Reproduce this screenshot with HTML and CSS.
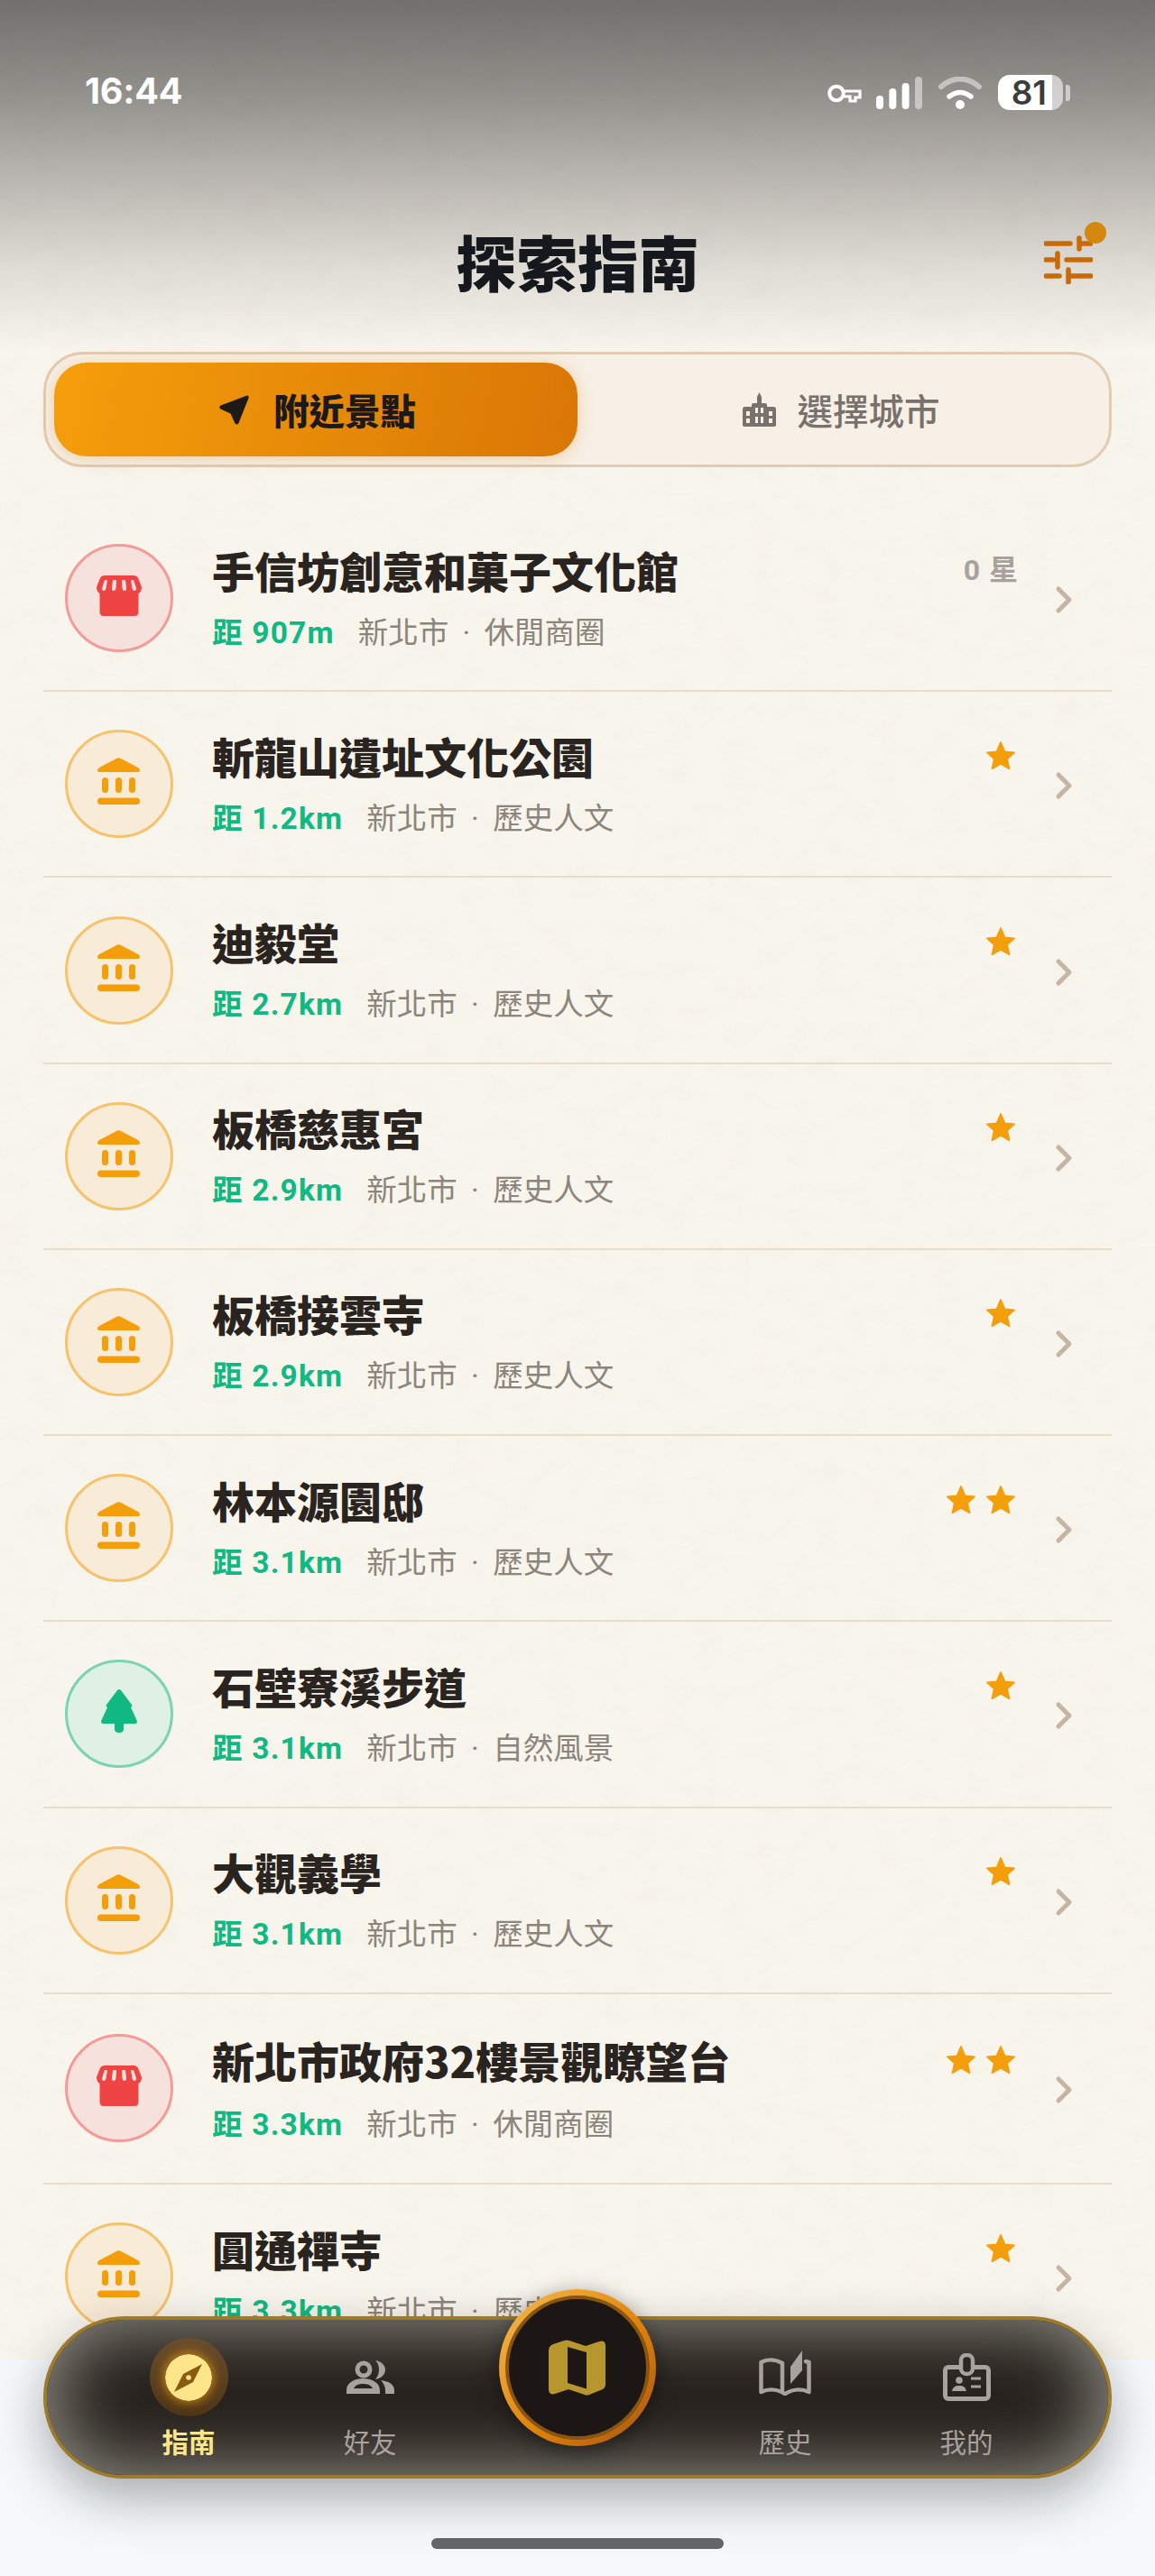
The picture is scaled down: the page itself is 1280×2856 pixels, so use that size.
FILE: index.html
```html
<!DOCTYPE html>
<html lang="zh-Hant">
<head>
<meta charset="utf-8">
<title>探索指南</title>
<link rel="stylesheet" href="styles.css">
</head>
<body>
<svg class="sprite" aria-hidden="true">
  <defs>
    <filter id="fibre" x="0" y="0" width="100%" height="100%">
      <feTurbulence type="fractalNoise" baseFrequency="0.03 0.045" numOctaves="5" seed="7"/>
      <feColorMatrix type="matrix" values="0 0 0 0 0.55  0 0 0 0 0.48  0 0 0 0 0.36  0 0 0 1.6 -0.72"/>
    </filter>
  </defs>
  <symbol id="star" viewBox="0 0 24 24"><polygon points="12,2 15,9 22,9.6 16.8,14.3 18.3,21.5 12,17.8 5.7,21.5 7.2,14.3 2,9.6 9,9" fill="#f59e0b" stroke="#f59e0b" stroke-width="1.2" stroke-linejoin="round"/></symbol>
  <symbol id="chev" viewBox="0 0 40 40"><path d="M14 8 L26 20 L14 32" fill="none" stroke="#c4b5a5" stroke-width="5" stroke-linecap="round" stroke-linejoin="round"/></symbol>
  <symbol id="store" viewBox="0 0 50 45">
    <path d="M9 0 H41 Q45 0 46.5 4 L50 13 Q50 18 46.5 20 V40 Q46.5 45 42 45 H8 Q3.500 45 3.500 40 V20 Q0 18 0 13 L3.500 4 Q5 0 9 0Z" fill="#ef4444"/>
    <path d="M9 5 H12 L10.500 14 Q10 17 8 17 Q6 17 6 14 Z M18 5 H22 L21.500 14 Q21 17 19 17 Q17 17 17 14 Z M28 5 H32 L33 14 Q33 17 31 17 Q29 17 28.500 14 Z M38 5 H41 L44 14 Q44 17 42 17 Q40 17 39.500 14 Z" fill="#f6e2dc"/>
  </symbol>
  <symbol id="temple" viewBox="0 0 47 52">
    <path d="M22 .6 Q23.500 -.2 25 .6 L45 11 Q47 12.500 47 14 Q47 16 44 16 H3 Q0 16 0 14 Q0 12.500 2 11Z" fill="#f59e0b"/>
    <rect x="5" y="22" width="7" height="17" rx="3.500" fill="#f59e0b"/>
    <rect x="20" y="22" width="7" height="17" rx="3.500" fill="#f59e0b"/>
    <rect x="35" y="22" width="7" height="17" rx="3.500" fill="#f59e0b"/>
    <rect x="0" y="44.500" width="47" height="7.500" rx="3.700" fill="#f59e0b"/>
  </symbol>
  <symbol id="tree" viewBox="0 0 40 48">
    <path d="M18 1 Q20 -1 22 1 L34 17 Q35 19 33 20 L39.500 34 Q41 38 37 38 H25 V44 Q25 48 20 48 Q15 48 15 44 V38 H3 Q-1 38 .5 34 L7 20 Q5 19 6 17Z" fill="#10b981"/>
  </symbol>
</svg>

<div class="phone">
  <main class="paper">
    <svg class="paper-grain" aria-hidden="true"><rect width="100%" height="100%" filter="url(#fibre)"/></svg>
    <div class="paper-shade"></div>

    <div class="statusbar">
      <span class="clock">16:44</span>
      <div class="status-icons">
        <svg class="ic-key" viewBox="0 0 38 21"><circle cx="10" cy="10.500" r="7.800" fill="none" stroke="#fff" stroke-width="4"/><path d="M18 8 H36 V15 H31 V19 H25 V14 H18" fill="none" stroke="#fff" stroke-width="3.200"/></svg>
        <svg class="ic-signal" viewBox="0 0 51 36"><rect x="0" y="21" width="8" height="15" rx="4" fill="#fff"/><rect x="14.300" y="13" width="8" height="23" rx="4" fill="#fff"/><rect x="28.600" y="7" width="8" height="29" rx="4" fill="#fff"/><rect x="43" y="0" width="8" height="36" rx="4" fill="#fff" fill-opacity=".48"/></svg>
        <svg class="ic-wifi" viewBox="0 0 48 36"><path d="M3 11 Q24 -6 45 11" fill="none" stroke="#fff" stroke-opacity=".48" stroke-width="6" stroke-linecap="round"/><path d="M12 22 Q24 13 36 22" fill="none" stroke="#fff" stroke-width="5.500" stroke-linecap="round"/><circle cx="24" cy="31" r="5" fill="#fff"/></svg>
        <div class="battery"><span class="battery-cell">81</span><span class="battery-nub"></span></div>
      </div>
    </div>

    <header class="topbar">
      <h1 class="page-title">探索指南</h1>
      <button class="filter-btn" aria-label="篩選">
        <svg class="ic-filter" viewBox="0 0 54 54"><path d="M2 9 H29 M40 9 H52 M39 3 V15 M2 27 H10 M25 27 H52 M15 20 V35 M2 45 H17 M30 45 H52 M27 38 V52" fill="none" stroke="#c96a08" stroke-width="5.500" stroke-linecap="round"/></svg>
        <span class="filter-dot"></span>
      </button>
    </header>

    <div class="segment">
      <button class="seg seg-on">
        <svg class="ic-arrow" viewBox="0 0 33 33"><path d="M30 .7 Q33 -.3 32.600 3 L21.500 31 Q19.500 34 17.300 31 L12.500 20.500 L1.500 15.500 Q-1 13.500 1.500 11.500Z" fill="#1c1917"/></svg>
        <span>附近景點</span>
      </button>
      <button class="seg seg-off">
        <svg class="ic-city" viewBox="0 0 37 38"><path fill-rule="evenodd" d="M18.500 0 L21 5 V12 H25 Q27 12 27 14 V16 H34 Q37 16 37 19 V36 Q37 38 35 38 H2 Q0 38 0 36 V19 Q0 16 3 16 H10 V14 Q10 12 12 12 H16 V5Z M4 21 V26 H8 V21Z M4 29 V34 H8 V29Z M14 17 V23 H17 V17Z M20 17 V23 H23 V17Z M14 27 V34 H17 V27Z M20 27 V34 H23 V27Z M29 21 V26 H33 V21Z M29 29 V34 H33 V29Z" fill="#78716c"/></svg>
        <span>選擇城市</span>
      </button>
    </div>

    <ul class="spots">
      <li class="spot">
        <div class="badge badge-shop"><svg class="ic-store"><use href="#store"/></svg></div>
        <div class="info">
          <div class="head"><h2 class="name">手信坊創意和菓子文化館</h2><span class="no-stars">0 星</span></div>
          <p class="meta"><b class="dist">距 907m</b><span class="place">新北市 · 休閒商圈</span></p>
        </div>
        <svg class="chev"><use href="#chev"/></svg>
      </li>
      <li class="spot">
        <div class="badge badge-hist"><svg class="ic-temple"><use href="#temple"/></svg></div>
        <div class="info">
          <div class="head"><h2 class="name">斬龍山遺址文化公園</h2><span class="stars"><svg class="star"><use href="#star"/></svg></span></div>
          <p class="meta"><b class="dist">距 1.2km</b><span class="place">新北市 · 歷史人文</span></p>
        </div>
        <svg class="chev"><use href="#chev"/></svg>
      </li>
      <li class="spot">
        <div class="badge badge-hist"><svg class="ic-temple"><use href="#temple"/></svg></div>
        <div class="info">
          <div class="head"><h2 class="name">迪毅堂</h2><span class="stars"><svg class="star"><use href="#star"/></svg></span></div>
          <p class="meta"><b class="dist">距 2.7km</b><span class="place">新北市 · 歷史人文</span></p>
        </div>
        <svg class="chev"><use href="#chev"/></svg>
      </li>
      <li class="spot">
        <div class="badge badge-hist"><svg class="ic-temple"><use href="#temple"/></svg></div>
        <div class="info">
          <div class="head"><h2 class="name">板橋慈惠宮</h2><span class="stars"><svg class="star"><use href="#star"/></svg></span></div>
          <p class="meta"><b class="dist">距 2.9km</b><span class="place">新北市 · 歷史人文</span></p>
        </div>
        <svg class="chev"><use href="#chev"/></svg>
      </li>
      <li class="spot">
        <div class="badge badge-hist"><svg class="ic-temple"><use href="#temple"/></svg></div>
        <div class="info">
          <div class="head"><h2 class="name">板橋接雲寺</h2><span class="stars"><svg class="star"><use href="#star"/></svg></span></div>
          <p class="meta"><b class="dist">距 2.9km</b><span class="place">新北市 · 歷史人文</span></p>
        </div>
        <svg class="chev"><use href="#chev"/></svg>
      </li>
      <li class="spot">
        <div class="badge badge-hist"><svg class="ic-temple"><use href="#temple"/></svg></div>
        <div class="info">
          <div class="head"><h2 class="name">林本源園邸</h2><span class="stars"><svg class="star"><use href="#star"/></svg><svg class="star"><use href="#star"/></svg></span></div>
          <p class="meta"><b class="dist">距 3.1km</b><span class="place">新北市 · 歷史人文</span></p>
        </div>
        <svg class="chev"><use href="#chev"/></svg>
      </li>
      <li class="spot">
        <div class="badge badge-nature"><svg class="ic-tree"><use href="#tree"/></svg></div>
        <div class="info">
          <div class="head"><h2 class="name">石壁寮溪步道</h2><span class="stars"><svg class="star"><use href="#star"/></svg></span></div>
          <p class="meta"><b class="dist">距 3.1km</b><span class="place">新北市 · 自然風景</span></p>
        </div>
        <svg class="chev"><use href="#chev"/></svg>
      </li>
      <li class="spot">
        <div class="badge badge-hist"><svg class="ic-temple"><use href="#temple"/></svg></div>
        <div class="info">
          <div class="head"><h2 class="name">大觀義學</h2><span class="stars"><svg class="star"><use href="#star"/></svg></span></div>
          <p class="meta"><b class="dist">距 3.1km</b><span class="place">新北市 · 歷史人文</span></p>
        </div>
        <svg class="chev"><use href="#chev"/></svg>
      </li>
      <li class="spot">
        <div class="badge badge-shop"><svg class="ic-store"><use href="#store"/></svg></div>
        <div class="info">
          <div class="head"><h2 class="name name-latin">新北市政府32樓景觀瞭望台</h2><span class="stars"><svg class="star"><use href="#star"/></svg><svg class="star"><use href="#star"/></svg></span></div>
          <p class="meta"><b class="dist">距 3.3km</b><span class="place">新北市 · 休閒商圈</span></p>
        </div>
        <svg class="chev"><use href="#chev"/></svg>
      </li>
      <li class="spot">
        <div class="badge badge-hist"><svg class="ic-temple"><use href="#temple"/></svg></div>
        <div class="info">
          <div class="head"><h2 class="name">圓通禪寺</h2><span class="stars"><svg class="star"><use href="#star"/></svg></span></div>
          <p class="meta"><b class="dist">距 3.3km</b><span class="place">新北市 · 歷史人文</span></p>
        </div>
        <svg class="chev"><use href="#chev"/></svg>
      </li>
    </ul>
  </main>

  <nav class="tabbar">
    <a class="tab tab-on">
      <span class="tab-icon tab-bubble">
        <svg class="ic-compass" viewBox="0 0 52 52"><circle cx="26" cy="26" r="26" fill="#fde68a"/><path d="M41 11 L31 31 L10 42 L20 22Z" fill="#8a5a10"/><circle cx="26" cy="26" r="2.800" fill="#fde68a"/></svg>
      </span>
      <span class="tab-label">指南</span>
    </a>
    <a class="tab">
      <span class="tab-icon">
        <svg class="ic-people" viewBox="0 0 53 37"><circle cx="19" cy="10" r="7" fill="none" stroke="#a8a29e" stroke-width="5"/><path fill-rule="evenodd" d="M0 37 V33 C0 24 10 20 18 20 C27 20 37 24 37 33 V37Z M8 31 H29 C27 27 23 26 18 26 C14 26 10 27 8 31Z" fill="#a8a29e"/><path d="M32 0 C38 1 43 5 43 10 C43 16 38 20 32 21 C35 17 36 14 36 10 C36 6 35 3 32 0Z" fill="#a8a29e"/><path d="M38 22 C46 23 53 26 53 33 V37 H43 V33 C43 29 41 25 38 22Z" fill="#a8a29e"/></svg>
      </span>
      <span class="tab-label">好友</span>
    </a>
    <span class="tab-gap"></span>
    <a class="tab">
      <span class="tab-icon">
        <svg class="ic-book" viewBox="0 0 58 50"><path d="M26 44 V14 C19 10 10 9 2.500 13 V46 C11 42 21 43 29 48 C37 43 47 42 55.500 46 V13 L52 12" fill="none" stroke="#a8a29e" stroke-width="4.500" stroke-linejoin="round" stroke-linecap="round"/><path d="M48 0 L35 18 V37 L48 22Z" fill="#a8a29e"/></svg>
      </span>
      <span class="tab-label">歷史</span>
    </a>
    <a class="tab">
      <span class="tab-icon">
        <svg class="ic-card" viewBox="0 0 53 53"><rect x="2.500" y="15.500" width="48" height="35" rx="3.500" fill="none" stroke="#a8a29e" stroke-width="5"/><rect x="20" y="2" width="13" height="21" rx="6" fill="#2b2621" stroke="#a8a29e" stroke-width="4.500"/><circle cx="18" cy="30" r="3.800" fill="#a8a29e"/><path d="M10 42 C11 37 14 36 18 36 C22 36 25 37 26 42Z" fill="#a8a29e"/><path d="M31 28 H42 M31 37 H42" stroke="#a8a29e" stroke-width="3.200"/></svg>
      </span>
      <span class="tab-label">我的</span>
    </a>
    <button class="map-fab" aria-label="地圖">
      <span class="map-core">
        <svg class="ic-map" viewBox="0 0 64 62"><path fill-rule="evenodd" d="M0 12 Q0 7 5 5 L17 1 Q20 0 23 1 L41 7 L56 2 Q63 0 63 7 V50 Q63 53 60 55 L45 61 Q42 62 40 61 L22 55 L7 60 Q0 62 0 55Z M21 8 V48 L42 54.500 V14Z" fill="#b8962e"/></svg>
      </span>
    </button>
  </nav>
  <div class="home-bar"></div>
</div>
</body>
</html>
```

FILE: styles.css
```css
* { box-sizing: border-box; margin: 0; padding: 0; }
html, body { background: #f6f9fc; }
body {
  width: 1280px;
  height: 2856px;
  overflow: hidden;
  font-family: Roboto, "Noto Sans CJK TC", sans-serif;
}
button { border: 0; background: none; font: inherit; }
ul { list-style: none; }

.sprite { position: absolute; width: 0; height: 0; }

.phone { position: relative; width: 1280px; height: 2856px; }

.paper {
  position: relative;
  height: 2616px;
  overflow: hidden;
  background: #f8f5ed;
}
.paper-grain { position: absolute; inset: 0; width: 100%; height: 100%; opacity: .07; pointer-events: none; }
.paper-shade {
  position: absolute;
  inset: 0 0 auto 0;
  height: 390px;
  background: linear-gradient(180deg, rgba(0,0,0,.54) 0%, rgba(0,0,0,.42) 25%, rgba(0,0,0,.26) 50%, rgba(0,0,0,.1) 76%, rgba(0,0,0,0) 100%);
  pointer-events: none;
}

/* status bar */
.statusbar {
  position: relative;
  height: 204px;
  padding: 78px 94px 0;
  display: flex;
  justify-content: space-between;
  align-items: flex-start;
}
.clock { font: 700 39.500px/46px Inter, sans-serif; color: #fff; letter-spacing: -.2px; }
.status-icons { display: flex; align-items: flex-start; margin-top: 5px; margin-right: 0; }
.ic-key { width: 38px; height: 21px; margin-top: 10px; margin-left: 0; }
.ic-signal { width: 51px; height: 36px; margin-left: 16px; margin-top: 2px; }
.ic-wifi { width: 48px; height: 36px; margin-left: 18px; margin-top: 2px; }
.battery { display: flex; align-items: center; margin-left: 18px; }
.battery-cell {
  width: 72px;
  height: 39px;
  border-radius: 13px;
  background: linear-gradient(90deg, #fff 83%, rgba(255,255,255,.58) 83%);
  font: 600 37px/39px Inter, sans-serif;
  color: #3c3c3e;
  text-align: right;
  padding-right: 18px;
}
.battery-nub { width: 5px; height: 18px; margin-left: 3px; border-radius: 0 3px 3px 0; background: rgba(255,255,255,.55); }

/* header */
.topbar {
  position: relative;
  height: 186px;
  display: flex;
  justify-content: center;
}
.page-title {
  font: 900 67.500px/96px "Noto Sans CJK TC", sans-serif;
  color: #15181c;
  margin-top: 37px;
}
.filter-btn { position: absolute; left: 1157px; top: 57px; width: 54px; height: 54px; }
.ic-filter { display: block; width: 54px; height: 54px; }
.filter-dot { position: absolute; left: 45px; top: -15px; width: 24px; height: 24px; border-radius: 50%; background: #d4880d; }

/* segment */
.segment {
  position: relative;
  margin: 0 48px;
  height: 128px;
  border: 3px solid #e2cbb1;
  border-radius: 44px;
  background: #f7f0e6;
  padding: 9px;
  display: grid;
  grid-template-columns: 580px 1fr;
}
.seg {
  display: flex;
  align-items: center;
  justify-content: center;
  padding-left: 4px;
  font: 900 39.500px/1 "Noto Sans CJK TC", sans-serif;
}
.seg-on {
  gap: 27px;
  color: #1c1917;
  border-radius: 36px;
  background: linear-gradient(100deg, #f59e0b 0%, #d97706 100%);
  box-shadow: 0 2px 18px rgba(217,119,6,.28);
}
.seg-off { gap: 24px; color: #78716c; font-weight: 500; }
.ic-arrow { width: 33px; height: 33px; }
.ic-city { width: 37px; height: 38px; }

/* list */
.spots { position: relative; margin: 43px 48px 0; }
.spot {
  display: flex;
  align-items: center;
  padding: 40.620px 33px 40.620px 24px;
  border-bottom: 2px solid #e8dccb;
}
.badge {
  flex: none;
  width: 120px;
  height: 120px;
  border-radius: 50%;
  border: 3.500px solid;
  display: flex;
  align-items: center;
  justify-content: center;
  margin-right: 43px;
}
.badge-shop { background: #f6e2dc; border-color: #f59a96; }
.badge-hist { background: #f8ecd8; border-color: #f6c26c; }
.badge-nature { background: #dff0e4; border-color: #7bd4b0; }
.ic-store { width: 50px; height: 45px; margin-top: -6px; }
.ic-temple { width: 47px; height: 52px; margin-top: -6px; margin-left: -2px; }
.ic-tree { width: 40px; height: 48px; margin-top: -6px; }

.info { flex: 1; min-width: 0; display: flex; flex-direction: column; gap: 17px; }
.head { display: flex; align-items: center; justify-content: space-between; }
.name {
  font: 900 47px/60px "Noto Sans CJK TC", sans-serif;
  color: #292420;
}
.name-latin { line-height: 65px; }
.meta {
  display: flex;
  align-items: center;
  gap: 26px;
  font: 400 33.500px/46px Roboto, "Noto Sans CJK TC", sans-serif;
}
.dist { color: #10b981; font-weight: 700; letter-spacing: 1.200px; }
.place { color: #8c857b; word-spacing: 7px; }
.no-stars { font: 700 32px/1 Roboto, "Noto Sans CJK TC", sans-serif; color: #a8a29e; letter-spacing: 1px; }
.stars { display: flex; gap: 8px; padding-right: 2px; }
.star { width: 36px; height: 36px; display: block; }
.chev { flex: none; width: 40px; height: 40px; margin-left: 30px; margin-top: 4px; }

/* tab bar */
.tabbar {
  position: absolute;
  left: 48px;
  top: 2568px;
  width: 1184px;
  height: 180px;
  padding: 20px 56.500px 0;
  border: 4px solid #9c7a2e;
  border-radius: 90px;
  background: #26211c;
  box-shadow: inset 0 0 76px 8px rgba(232,232,220,.55), 0 22px 56px rgba(20,20,20,.34);
  display: grid;
  grid-template-columns: 201px 201px 1fr 201px 201px;
}
.tab { display: flex; flex-direction: column; align-items: center; }
.tab-icon { width: 87px; height: 87px; display: flex; align-items: center; justify-content: center; }
.tab-bubble { border-radius: 50%; background: linear-gradient(180deg, #6b4e2c, #4e3516); }
.tab-label { margin-top: 5px; font: 400 29.500px/44px "Noto Sans CJK TC", sans-serif; color: #a8a29e; }
.tab-on .tab-label { font-weight: 700; color: #fde68a; }
.ic-compass { width: 52px; height: 52px; border-radius: 50%; box-shadow: 0 0 10px 3px rgba(245,158,11,.55); }
.ic-people { width: 53px; height: 37px; }
.ic-book { width: 58px; height: 50px; margin-top: -9px; }
.ic-card { width: 53px; height: 53px; }

.map-fab {
  position: absolute;
  left: 501px;
  top: -34px;
  width: 174px;
  height: 174px;
  border-radius: 50%;
  padding: 7px;
  background: linear-gradient(135deg, #f4bc52 0%, #e0830c 55%, #a5530f 100%);
  box-shadow: 0 6px 24px rgba(0,0,0,.45);
}
.map-core {
  width: 100%;
  height: 100%;
  display: flex;
  align-items: center;
  justify-content: center;
  border-radius: 50%;
  border: 4px solid #8a5510;
  background: #1c1714;
}
.ic-map { width: 64px; height: 62px; }

.home-bar {
  position: absolute;
  left: 478px;
  top: 2814px;
  width: 324px;
  height: 12px;
  border-radius: 6px;
  background: #636468;
}
```
